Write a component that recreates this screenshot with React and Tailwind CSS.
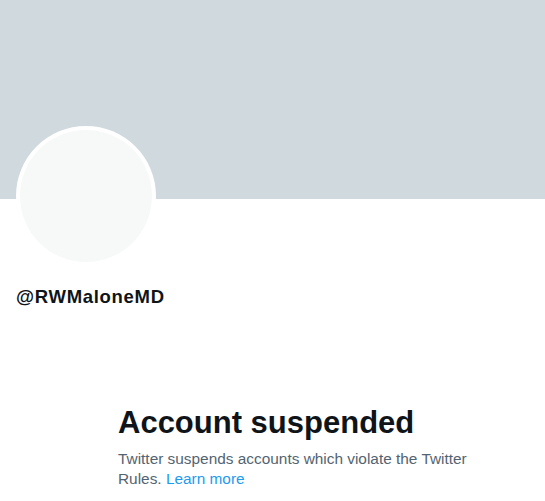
export default function App() {
  return (
    <div className="w-[545px] h-[501px] overflow-hidden bg-white" style={{ fontFamily: '"Liberation Sans", Arial, sans-serif' }}>
      {/* banner */}
      <div className="h-[199px] bg-[#cfd9de]" />

      {/* avatar + handle */}
      <div className="px-4">
        <div className="-mt-[73px] w-[140px] h-[140px] rounded-full bg-white p-1">
          <div className="w-full h-full rounded-full bg-[#f7f9f9]" />
        </div>
        <div className="mt-[21px] text-[18.5px] leading-5 font-bold tracking-[0.7px] text-[#0f1419]">@RWMaloneMD</div>
      </div>

      {/* empty state */}
      <div className="mt-[98px] pl-[118px] w-[474px]">
        <h2 className="text-[31px] leading-9 font-bold text-[#0f1419]">Account suspended</h2>
        <p className="mt-[8px] text-[15.4px] leading-5 text-[#536471]">
          Twitter suspends accounts which violate the Twitter Rules.{' '}
          <span className="text-[#1d9bf0]">Learn more</span>
        </p>
      </div>
    </div>
  );
}
